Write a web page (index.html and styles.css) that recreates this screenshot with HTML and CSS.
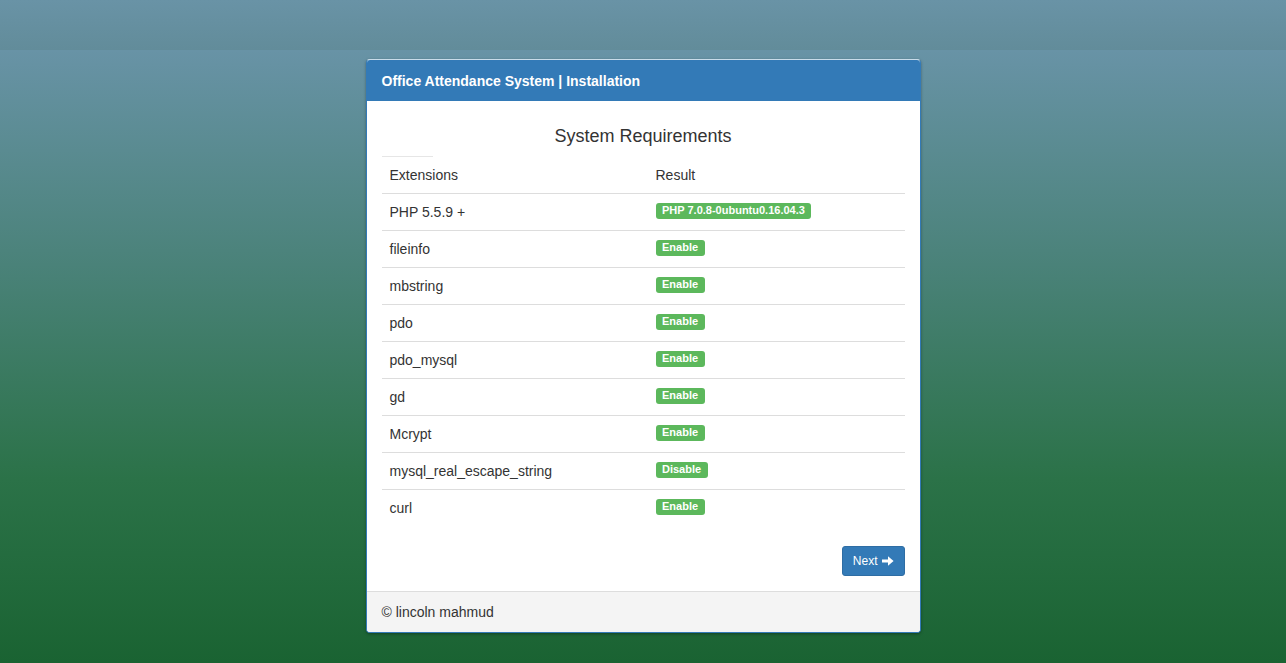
FILE: index.html
```html
<!DOCTYPE html>
<html>
<head>
<meta charset="utf-8">
<title>Installation</title>
<link rel="stylesheet" href="styles.css">
</head>
<body>
<div class="topbar"></div>
<main class="main">
  <section class="panel">
    <header class="panel-heading">Office Attendance System | Installation</header>
    <div class="panel-body">
      <h4 class="title">System Requirements</h4>
      <div class="short-rule"></div>
      <table class="req-table">
        <thead>
          <tr><th class="col-ext">Extensions</th><th>Result</th></tr>
        </thead>
        <tbody>
          <tr><td>PHP 5.5.9 +</td><td><span class="label">PHP 7.0.8-0ubuntu0.16.04.3</span></td></tr>
          <tr><td>fileinfo</td><td><span class="label">Enable</span></td></tr>
          <tr><td>mbstring</td><td><span class="label">Enable</span></td></tr>
          <tr><td>pdo</td><td><span class="label">Enable</span></td></tr>
          <tr><td>pdo_mysql</td><td><span class="label">Enable</span></td></tr>
          <tr><td>gd</td><td><span class="label">Enable</span></td></tr>
          <tr><td>Mcrypt</td><td><span class="label">Enable</span></td></tr>
          <tr><td>mysql_real_escape_string</td><td><span class="label">Disable</span></td></tr>
          <tr><td>curl</td><td><span class="label">Enable</span></td></tr>
        </tbody>
      </table>
      <div class="actions">
        <button class="btn-next">Next <svg class="arrow" viewBox="0 0 12 12" width="12" height="12"><path d="M0 4.5h6V1.2L11.6 6 6 10.8V7.5H0z" fill="#fff"/></svg></button>
      </div>
    </div>
    <footer class="panel-footer">© lincoln mahmud</footer>
  </section>
</main>
</body>
</html>
```

FILE: styles.css
```css
html, body {
  margin: 0;
  padding: 0;
  height: 100%;
}
body {
  font-family: "Liberation Sans", Arial, Helvetica, sans-serif;
  font-size: 14px;
  line-height: 20px;
  color: #333;
  display: flex;
  flex-direction: column;
  min-height: 663px;
}
.topbar {
  height: 50px;
  flex: none;
  background: linear-gradient(#6993a6, #628c9a);
}
.main {
  flex: 1;
  background: linear-gradient(#6893a6 0%, #4a8279 35%, #2b7248 70%, #1a6332 100%);
  padding-top: 9px;
  display: flex;
  justify-content: center;
  align-items: flex-start;
}
.panel {
  width: 553px;
  background: #fff;
  border: 1px solid #337ab7;
  border-top-color: #c9dcea;
  border-radius: 4px;
  box-shadow: 0 1px 3px rgba(0,0,0,0.35);
  overflow: hidden;
}
.panel-heading {
  background: #337ab7;
  color: #fff;
  font-weight: bold;
  font-size: 14px;
  line-height: 22px;
  padding: 10px 15px 9px;
}
.panel-body {
  padding: 15px;
}
.title {
  margin: 10px 0 10px;
  font-size: 18px;
  font-weight: normal;
  line-height: 20px;
  text-align: center;
  color: #333;
}
.short-rule {
  width: 51px;
  height: 1px;
  background: #e6e6e6;
}
.req-table {
  width: 100%;
  border-collapse: collapse;
  border-spacing: 0;
}
.req-table th, .req-table td {
  text-align: left;
  font-weight: normal;
  padding: 8px;
  line-height: 20px;
  vertical-align: top;
}
.req-table th {
  border-bottom: 1px solid #ddd;
}
.req-table td {
  border-top: 1px solid #ddd;
}
.req-table tbody tr:first-child td {
  border-top: 0;
}
.col-ext {
  width: 250px;
}
.label {
  display: inline-block;
  background: #5cb85c;
  color: #fff;
  font-size: 11px;
  font-weight: bold;
  line-height: 1;
  padding: 2px 6.5px 3px;
  border-radius: 3px;
  vertical-align: top;
  margin-top: 1px;
}
.actions {
  display: flex;
  justify-content: flex-end;
  margin-top: 20px;
}
.btn-next {
  font-family: "Liberation Sans", Arial, Helvetica, sans-serif;
  font-size: 12px;
  line-height: 18px;
  height: 30px;
  padding: 5px 10px 5px 10px;
  color: #fff;
  background: #337ab7;
  border: 1px solid #2e6da4;
  border-radius: 3px;
  display: inline-flex;
  align-items: center;
  gap: 4px;
}
.arrow {
  display: block;
}
.panel-footer {
  background: #f4f4f4;
  border-top: 1px solid #ddd;
  padding: 10px 15px;
  line-height: 20px;
  font-size: 14px;
}
```
